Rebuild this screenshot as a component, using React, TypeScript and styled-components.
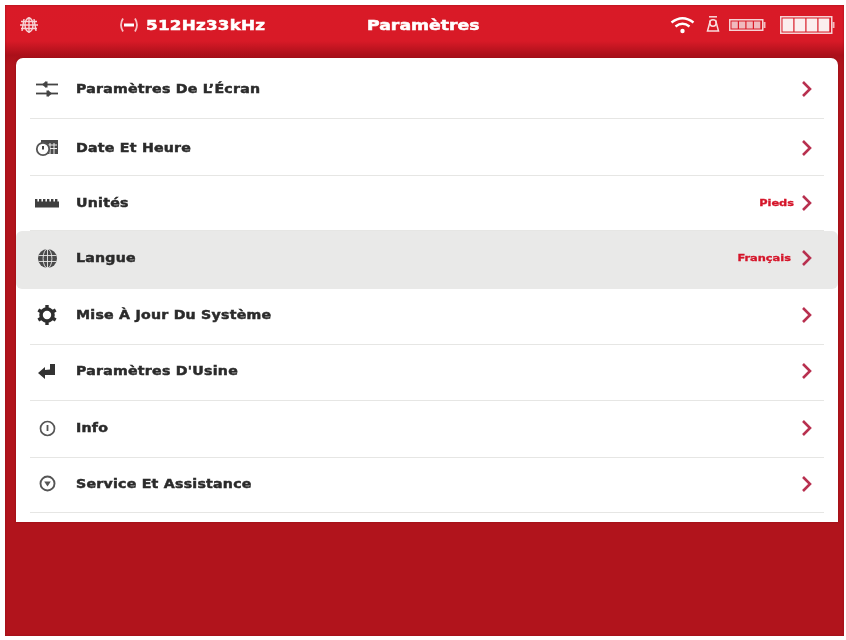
import React from "react";
import styled, { createGlobalStyle } from "styled-components";

const Global = createGlobalStyle`
  html, body { margin: 0; padding: 0; background: #fff; }
  body { font-family: "DejaVu Sans", "Liberation Sans", sans-serif; }
`;

const Page = styled.div`
  width: 846px;
  height: 640px;
  padding: 5px 2px 4px 5px;
  box-sizing: border-box;
  overflow: hidden;
  background: #fff;
`;

const Frame = styled.div`
  height: 100%;
  display: flex;
  flex-direction: column;
  background: linear-gradient(180deg, #d91a27 0, #d81a27 36px, #ab101a 50px, #b1141c 60px, #b1141c 100%);
  box-shadow: inset 0 0 2px #8e1017;
  filter: blur(0.4px);
`;

const Header = styled.header`
  height: 53px;
  flex: none;
  display: flex;
  align-items: flex-start;
  padding: 10px 9px 0 14px;
  box-sizing: border-box;
  color: #fff;
`;

const HeaderIconSlot = styled.div`
  width: 99px;
  height: 20px;
  display: flex;
  align-items: center;
`;

const Signal = styled.div`
  width: 249px;
  display: flex;
  align-items: center;
  gap: 6px;
  height: 20px;
`;

const Stretched = styled.span`
  display: inline-block;
  white-space: nowrap;
  transform-origin: left center;
`;

const Range = styled(Stretched)`
  font-size: 13.5px;
  line-height: 20px;
  font-weight: 700;
  letter-spacing: 0.2px;
  transform: scaleX(1.24);
  -webkit-text-stroke: 0.5px #fff;
`;

const Title = styled.h1`
  margin: 0;
  width: 239px;
  font-size: 13.5px;
  line-height: 20px;
  font-weight: 700;
`;

const TitleText = styled(Stretched)`
  transform: scaleX(1.28);
  -webkit-text-stroke: 0.5px #fff;
`;

const Status = styled.div`
  display: flex;
  align-items: center;
  height: 20px;
  flex: 1;
  justify-content: flex-end;
`;

const StatusGap = styled.span<{ $w: number }>`
  width: ${(p) => p.$w}px;
  flex: none;
`;

const Panel = styled.main`
  margin: 0 6px 0 11px;
  height: 464px;
  flex: none;
  background: #fff;
  border-radius: 7px 7px 0 0;
  box-shadow: 0 0 2px rgba(120, 10, 15, 0.7);
  padding-bottom: 9px;
  box-sizing: border-box;
`;

const Row = styled.div<{ $h: number; $lift: number; $active?: boolean }>`
  height: ${(p) => p.$h}px;
  box-sizing: border-box;
  padding: 0 26px ${(p) => p.$lift}px 16px;
  display: flex;
  align-items: center;
  position: relative;
  background: ${(p) => (p.$active ? "#e9e9e8" : "transparent")};
  border-radius: ${(p) => (p.$active ? "6px" : "0")};
  &::after {
    content: "";
    display: ${(p) => (p.$active ? "none" : "block")};
    position: absolute;
    left: 14px;
    right: 14px;
    bottom: 0;
    height: 1px;
    background: #e6e6e4;
  }
`;

const RowIcon = styled.span`
  width: 30px;
  height: 24px;
  flex: none;
  display: flex;
  align-items: center;
  justify-content: center;
  color: #3a3a3a;
`;

const RowLabel = styled.span`
  margin-left: 14px;
  flex: 1;
  font-size: 11.5px;
  font-weight: 700;
  letter-spacing: 0.2px;
  color: #2b2b2b;
`;

const LabelText = styled(Stretched)`
  transform: scaleX(1.23);
  -webkit-text-stroke: 0.45px #2b2b2b;
`;

const RowValue = styled.span<{ $gap: number }>`
  font-size: 8.5px;
  font-weight: 700;
  color: #d5152a;
  margin-right: ${(p) => p.$gap}px;
`;

const ValueText = styled(Stretched)`
  transform-origin: right center;
  transform: scaleX(1.34);
  -webkit-text-stroke: 0.3px #d5152a;
`;

const Chevron = () => (
  <svg width="11" height="18" viewBox="0 0 11 18" fill="none">
    <path d="M2 2l7 7-7 7" stroke="#b8304f" strokeWidth="2.6" />
  </svg>
);

const GlobeGrid = () => (
  <svg width="20" height="16" viewBox="0 0 20 16" fill="none" stroke="#f7d5d7" strokeWidth="1.4">
    <ellipse cx="10" cy="8" rx="4" ry="7" />
    <path d="M2 4.5h16M1 8h18M2 11.5h16M10 0v16M5 2l-2 12M15 2l2 12" />
  </svg>
);

const Wave = () => (
  <svg width="22" height="16" viewBox="0 0 22 16" fill="none" stroke="#f6c3c7" strokeWidth="1.8">
    <path d="M5 1.5Q1 8 5 14.5M17 1.5Q21 8 17 14.5" />
    <path d="M6 8h10" strokeWidth="3" stroke="#fff" />
  </svg>
);

const Wifi = () => (
  <svg width="25" height="18" viewBox="0 0 25 18" fill="none" stroke="#fff" strokeWidth="2.4">
    <path d="M1.5 6.5Q12.5-2 23.5 6.5M5.5 10.5Q12.5 5 19.5 10.5" />
    <circle cx="12.5" cy="15" r="2.2" fill="#fff" stroke="none" />
  </svg>
);

const Mast = () => (
  <svg width="14" height="18" viewBox="0 0 14 18" fill="none" stroke="#f9dcdd" strokeWidth="1.5">
    <path d="M3 0.8h8" />
    <circle cx="7" cy="7" r="3.2" />
    <path d="M4.5 4L1.5 15h11L9.5 4" />
  </svg>
);

const Battery = ({ width, height, cellColor }: { width: number; height: number; cellColor: string }) => {
  const cell = (width - 7) / 4;
  return (
    <svg width={width} height={height} viewBox={`0 0 ${width} ${height}`} fill="none">
      <rect x="0.75" y="0.75" width={width - 4} height={height - 1.5} stroke="#f6d3d5" strokeWidth="1.5" />
      <rect x={width - 2.5} y={height / 2 - 3} width="2" height="6" fill="#f3b8bc" />
      {[0, 1, 2, 3].map((i) => (
        <rect key={i} x={2.5 + i * cell} y="2.5" width={cell - 1.2} height={height - 5} fill={cellColor} />
      ))}
    </svg>
  );
};

const Sliders = () => (
  <svg width="24" height="18" viewBox="0 0 24 18" fill="#444">
    <rect x="1" y="3.6" width="22" height="1.8" />
    <rect x="1" y="12.6" width="22" height="1.8" />
    <path d="M7 4.5l3.5-3v6zM17 13.5l-3.5-3v6z" />
    <rect x="10" y="1.5" width="2.5" height="6" />
    <rect x="11.5" y="10.5" width="2.5" height="6" />
  </svg>
);

const CalendarClock = () => (
  <svg width="24" height="20" viewBox="0 0 24 20" fill="none">
    <rect x="6" y="2" width="17" height="14" fill="#4a4a4a" />
    <path d="M13 7h9M13 10.5h9M15 5v11M19 5v11" stroke="#eee" strokeWidth="1" />
    <circle cx="8" cy="11" r="6.2" fill="#fff" stroke="#555" strokeWidth="1.8" />
    <path d="M8 8v3.5" stroke="#444" strokeWidth="2" />
  </svg>
);

const Ruler = () => (
  <svg width="26" height="10" viewBox="0 0 26 10" fill="#3f3f3f">
    <rect x="1" y="3.5" width="24" height="6" />
    {[1, 5, 9, 13, 17, 21].map((x) => (
      <rect key={x} x={x} y="1" width="2.4" height="4" />
    ))}
  </svg>
);

const Globe = () => (
  <svg width="21" height="21" viewBox="0 0 21 21" fill="#4a4a4a">
    <circle cx="10.5" cy="10.5" r="9.5" />
    <g fill="none" stroke="#e9e9e8" strokeWidth="0.9">
      <ellipse cx="10.5" cy="10.5" rx="4.4" ry="9.5" />
      <path d="M10.5 1v19M1.5 7.5h18M1.5 13.5h18" />
    </g>
  </svg>
);

const Gear = () => (
  <svg width="20" height="22" viewBox="0 0 20 22" fill="none">
    <circle cx="10" cy="11" r="6" stroke="#2e2e2e" strokeWidth="3.6" />
    <g stroke="#2e2e2e" strokeWidth="3.4">
      <path d="M10 1v3M10 18v3M1.3 6l2.6 1.5M16.1 14.5l2.6 1.5M1.3 16l2.6-1.5M16.1 7.5L18.7 6" />
    </g>
  </svg>
);

const ReturnArrow = () => (
  <svg width="20" height="16" viewBox="0 0 20 16" fill="#333">
    <path d="M1 10l7-6v3l5-.5V1h5v11H8v4z" />
  </svg>
);

const InfoCircle = () => (
  <svg width="17" height="17" viewBox="0 0 17 17" fill="none">
    <circle cx="8.5" cy="8.5" r="7" stroke="#555" strokeWidth="1.7" />
    <rect x="7.6" y="5" width="1.8" height="6" fill="#555" />
  </svg>
);

const SupportCircle = () => (
  <svg width="17" height="17" viewBox="0 0 17 17" fill="none">
    <circle cx="8.5" cy="8.5" r="7" stroke="#555" strokeWidth="1.9" />
    <path d="M5.2 6.5h6.6L8.5 11.5z" fill="#555" />
  </svg>
);

const rows = [
  { label: "Paramètres De L’Écran", icon: <Sliders />, h: 61, lift: 0 },
  { label: "Date Et Heure", icon: <CalendarClock />, h: 57, lift: 0 },
  { label: "Unités", icon: <Ruler />, h: 55, value: "Pieds", gap: 7, lift: 2 },
  { label: "Langue", icon: <Globe />, h: 58, value: "Français", gap: 10, lift: 4, active: true },
  { label: "Mise À Jour Du Système", icon: <Gear />, h: 56, lift: 4 },
  { label: "Paramètres D'Usine", icon: <ReturnArrow />, h: 56, lift: 4 },
  { label: "Info", icon: <InfoCircle />, h: 57, lift: 3 },
  { label: "Service Et Assistance", icon: <SupportCircle />, h: 55, lift: 4 },
];

export default function App() {
  return (
    <Page>
      <Global />
      <Frame>
        <Header>
          <HeaderIconSlot>
            <GlobeGrid />
          </HeaderIconSlot>
          <Signal>
            <Wave />
            <Range>512Hz33kHz</Range>
          </Signal>
          <Title>
            <TitleText>Paramètres</TitleText>
          </Title>
          <Status>
            <Wifi />
            <StatusGap $w={11} />
            <Mast />
            <StatusGap $w={9} />
            <Battery width={37} height={12} cellColor="#f0b9bd" />
            <StatusGap $w={14} />
            <Battery width={55} height={18} cellColor="#fbeeee" />
          </Status>
        </Header>
        <Panel>
          {rows.map((r) => (
            <Row key={r.label} $h={r.h} $lift={r.lift} $active={r.active}>
              <RowIcon>{r.icon}</RowIcon>
              <RowLabel>
                <LabelText>{r.label}</LabelText>
              </RowLabel>
              {r.value && (
                <RowValue $gap={r.gap ?? 8}>
                  <ValueText>{r.value}</ValueText>
                </RowValue>
              )}
              <Chevron />
            </Row>
          ))}
        </Panel>
      </Frame>
    </Page>
  );
}
